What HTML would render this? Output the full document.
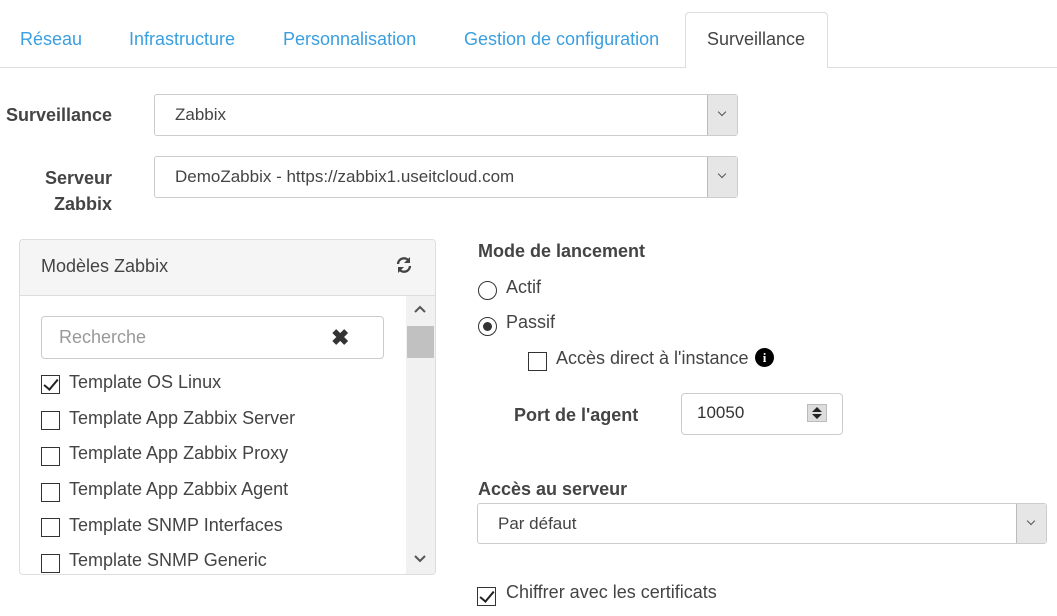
<!DOCTYPE html><html><head><style>
body{margin:0;width:1057px;height:616px;background:#fff;font-family:"Liberation Sans",sans-serif;color:#555;position:relative;overflow:hidden;font-size:18px}
.a{position:absolute;white-space:nowrap}
.tab{color:#3a9fe0;top:29px}
.b{font-weight:bold;color:#444}
.sel{position:absolute;border:1px solid #ccc;border-radius:3px;background:#fff;box-sizing:border-box}
.sel .arr{position:absolute;right:0;top:0;bottom:0;width:29px;background:#e6e6e6;border-left:1px solid #bbb}
.sel .arr:after{content:"";position:absolute;left:11px;top:14px;width:5px;height:5px;border-right:1px solid #555;border-bottom:1px solid #555;transform:rotate(45deg)}
.sel span{position:absolute;left:20px;top:10px;color:#444;font-size:17px}
.cb{position:absolute;width:19px;height:19px;border:1px solid #333;box-sizing:border-box;background:#fff}
.ck:after{content:"";position:absolute;left:5px;top:0px;width:6px;height:12px;border-right:2px solid #222;border-bottom:2px solid #222;transform:rotate(40deg)}
.li{position:absolute;left:69px;color:#444}
</style></head><body>
<div class="a" style="left:0;right:0;top:67px;height:1px;background:#ddd;position:absolute"></div>
<div class="a tab" style="left:20px">Réseau</div>
<div class="a tab" style="left:129px">Infrastructure</div>
<div class="a tab" style="left:283px">Personnalisation</div>
<div class="a tab" style="left:464px">Gestion de configuration</div>
<div style="position:absolute;left:685px;top:12px;width:143px;height:56px;border:1px solid #ddd;border-bottom:none;border-radius:4px 4px 0 0;background:#fff;box-sizing:border-box"></div>
<div class="a" style="left:707px;top:29px;color:#444">Surveillance</div>

<div class="a b" style="left:6px;top:105px">Surveillance</div>
<div class="sel" style="left:154px;top:94px;width:584px;height:42px"><span>Zabbix</span><div class="arr"></div></div>
<div class="a b" style="left:45px;top:168px">Serveur</div>
<div class="a b" style="left:54px;top:194px">Zabbix</div>
<div class="sel" style="left:154px;top:156px;width:584px;height:42px"><span>DemoZabbix - https://zabbix1.useitcloud.com</span><div class="arr"></div></div>

<div style="position:absolute;left:19px;top:239px;width:417px;height:336px;border:1px solid #ddd;border-radius:4px;box-sizing:border-box;overflow:hidden">
<div style="height:55px;background:#f5f5f5;border-bottom:1px solid #ddd"></div>
<div style="position:absolute;left:386px;top:56px;width:29px;bottom:0;background:#f1f1f1"></div>
<div style="position:absolute;left:387px;top:86px;width:27px;height:32px;background:#c1c1c1"></div>
</div>
<div class="a" style="left:41px;top:256px;color:#444">Modèles Zabbix</div>
<svg style="position:absolute;left:395px;top:256px" width="18" height="18" viewBox="0 0 18 18"><path d="M3 8a6 6 0 0 1 11-3M15 10a6 6 0 0 1-11 3" fill="none" stroke="#444" stroke-width="2.4"/><path d="M15 1v6h-6z M3 17v-6h6z" fill="#444"/></svg>
<svg style="position:absolute;left:414px;top:305px" width="12" height="8"><path d="M1 7l5-5 5 5" fill="none" stroke="#555" stroke-width="2"/></svg>
<svg style="position:absolute;left:414px;top:555px" width="12" height="8"><path d="M1 1l5 5 5-5" fill="none" stroke="#555" stroke-width="2"/></svg>
<div style="position:absolute;left:41px;top:316px;width:343px;height:43px;border:1px solid #ccc;border-radius:4px;box-sizing:border-box"></div>
<div class="a" style="left:59px;top:327px;color:#999">Recherche</div>
<div class="a" style="left:331px;top:325px;font-size:22px;color:#333;font-weight:bold">✖</div>
<div class="cb ck" style="left:41px;top:375px"></div><div class="li" style="top:372px">Template OS Linux</div>
<div class="cb" style="left:41px;top:411px"></div><div class="li" style="top:408px">Template App Zabbix Server</div>
<div class="cb" style="left:41px;top:447px"></div><div class="li" style="top:443px">Template App Zabbix Proxy</div>
<div class="cb" style="left:41px;top:483px"></div><div class="li" style="top:479px">Template App Zabbix Agent</div>
<div class="cb" style="left:41px;top:518px"></div><div class="li" style="top:515px">Template SNMP Interfaces</div>
<div class="cb" style="left:41px;top:554px"></div><div class="li" style="top:550px">Template SNMP Generic</div>

<div class="a b" style="left:478px;top:241px">Mode de lancement</div>
<div style="position:absolute;left:478px;top:281px;width:19px;height:19px;border:1px solid #333;border-radius:50%;box-sizing:border-box"></div>
<div class="a" style="left:506px;top:277px;color:#444">Actif</div>
<div style="position:absolute;left:478px;top:317px;width:19px;height:19px;border:1px solid #333;border-radius:50%;box-sizing:border-box"><div style="position:absolute;left:4px;top:4px;width:9px;height:9px;border-radius:50%;background:#333"></div></div>
<div class="a" style="left:506px;top:312px;color:#444">Passif</div>
<div class="cb" style="left:528px;top:352px"></div>
<div class="a" style="left:556px;top:348px;color:#444">Accès direct à l'instance</div>
<div style="position:absolute;left:755px;top:348px;width:19px;height:19px;border-radius:50%;background:#000;color:#fff;font:bold 13px 'Liberation Serif',serif;text-align:center;line-height:19px">i</div>
<div class="a b" style="left:514px;top:405px">Port de l'agent</div>
<div style="position:absolute;left:681px;top:393px;width:162px;height:42px;border:1px solid #ccc;border-radius:4px;box-sizing:border-box"></div>
<div class="a" style="left:697px;top:403px;color:#333;font-size:17px">10050</div>
<div style="position:absolute;left:807px;top:404px;width:20px;height:18px;background:#ddd;border:1px solid #bbb;box-sizing:border-box"><svg width="18" height="16" style="position:absolute;left:0;top:0"><path d="M4 7l5-5 5 5z M4 9l5 5 5-5z" fill="#222"/></svg></div>
<div class="a b" style="left:478px;top:479px">Accès au serveur</div>
<div class="sel" style="left:477px;top:503px;width:570px;height:41px"><span>Par défaut</span><div class="arr"></div></div>
<div class="cb ck" style="left:477px;top:587px"></div>
<div class="a" style="left:506px;top:582px;color:#444">Chiffrer avec les certificats</div>
</body></html>
